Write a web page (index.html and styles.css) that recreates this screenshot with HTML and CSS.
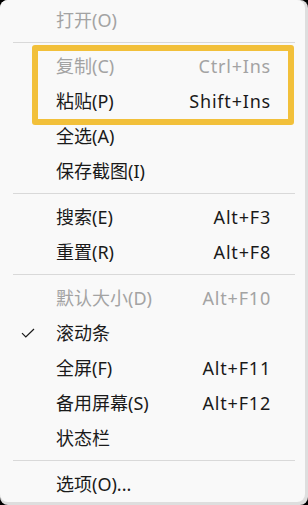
FILE: index.html
```html
<!DOCTYPE html>
<html lang="zh-CN">
<head>
  <meta charset="UTF-8" />
  <title>右键菜单</title>
  <link rel="stylesheet" href="styles.css">
</head>
<body>
  <div class="frame">
    <div class="menu">
      <div class="item disabled"><span class="check"></span><span class="label">打开(O)</span><span class="key"></span></div>
      <div class="sep"></div>
      <div class="item disabled"><span class="check"></span><span class="label">复制(C)</span><span class="key">Ctrl+Ins</span></div>
      <div class="item"><span class="check"></span><span class="label">粘贴(P)</span><span class="key">Shift+Ins</span></div>
      <div class="item"><span class="check"></span><span class="label">全选(A)</span><span class="key"></span></div>
      <div class="item"><span class="check"></span><span class="label">保存截图(I)</span><span class="key"></span></div>
      <div class="sep"></div>
      <div class="item"><span class="check"></span><span class="label">搜索(E)</span><span class="key">Alt+F3</span></div>
      <div class="item"><span class="check"></span><span class="label">重置(R)</span><span class="key">Alt+F8</span></div>
      <div class="sep"></div>
      <div class="item disabled"><span class="check"></span><span class="label">默认大小(D)</span><span class="key">Alt+F10</span></div>
      <div class="item">
        <span class="check">
          <svg width="14" height="10" viewBox="0 0 14 10"><path d="M1 5.2 L4.8 9 L13 1" fill="none" stroke="#1a1a1a" stroke-width="1.2"/></svg>
        </span>
        <span class="label">滚动条</span><span class="key"></span>
      </div>
      <div class="item"><span class="check"></span><span class="label">全屏(F)</span><span class="key">Alt+F11</span></div>
      <div class="item"><span class="check"></span><span class="label">备用屏幕(S)</span><span class="key">Alt+F12</span></div>
      <div class="item"><span class="check"></span><span class="label">状态栏</span><span class="key"></span></div>
      <div class="sep"></div>
      <div class="item"><span class="check"></span><span class="label">选项(O)...</span><span class="key"></span></div>

      <!-- 标注框 -->
      <div class="highlight"></div>
    </div>
  </div>
</body>
</html>
```

FILE: styles.css
```css
html, body {
  margin: 0;
  padding: 0;
  background-color: #000;
}

body {
  font-family: "Noto Sans", "Noto Sans CJK SC", sans-serif;
  font-size: 18px;
  color: #1a1a1a;
}

.frame {
  width: 308px;
  height: 505px;
  box-sizing: border-box;
  padding: 0 3px 3px 0;
  background-color: #dedede;
  border-radius: 8px;
}

.menu {
  position: relative;
  height: 100%;
  box-sizing: border-box;
  padding-top: 2px;
  background-color: #f9f9f9;
  border-radius: 8px;
}

.item {
  display: grid;
  grid-template-columns: 56px 1fr auto;
  align-items: center;
  height: 35px;
  padding-right: 34px;
  line-height: 1;
}

.item.disabled {
  color: #a3a3a3;
}

.key {
  letter-spacing: 0.8px;
}

.check {
  display: flex;
  justify-content: center;
  padding-left: 1px;
}

.check svg {
  margin-left: -2px;
}

.sep {
  height: 11px;
  display: flex;
  align-items: center;
  padding: 0 10px 0 13px;
}

.sep::before {
  content: "";
  flex: 1;
  height: 1px;
  background-color: #d9d9d9;
}

.highlight {
  position: absolute;
  left: 32px;
  top: 45px;
  width: 262px;
  height: 80px;
  box-sizing: border-box;
  border: 6px solid #f2c03a;
  border-radius: 3px;
}
```
